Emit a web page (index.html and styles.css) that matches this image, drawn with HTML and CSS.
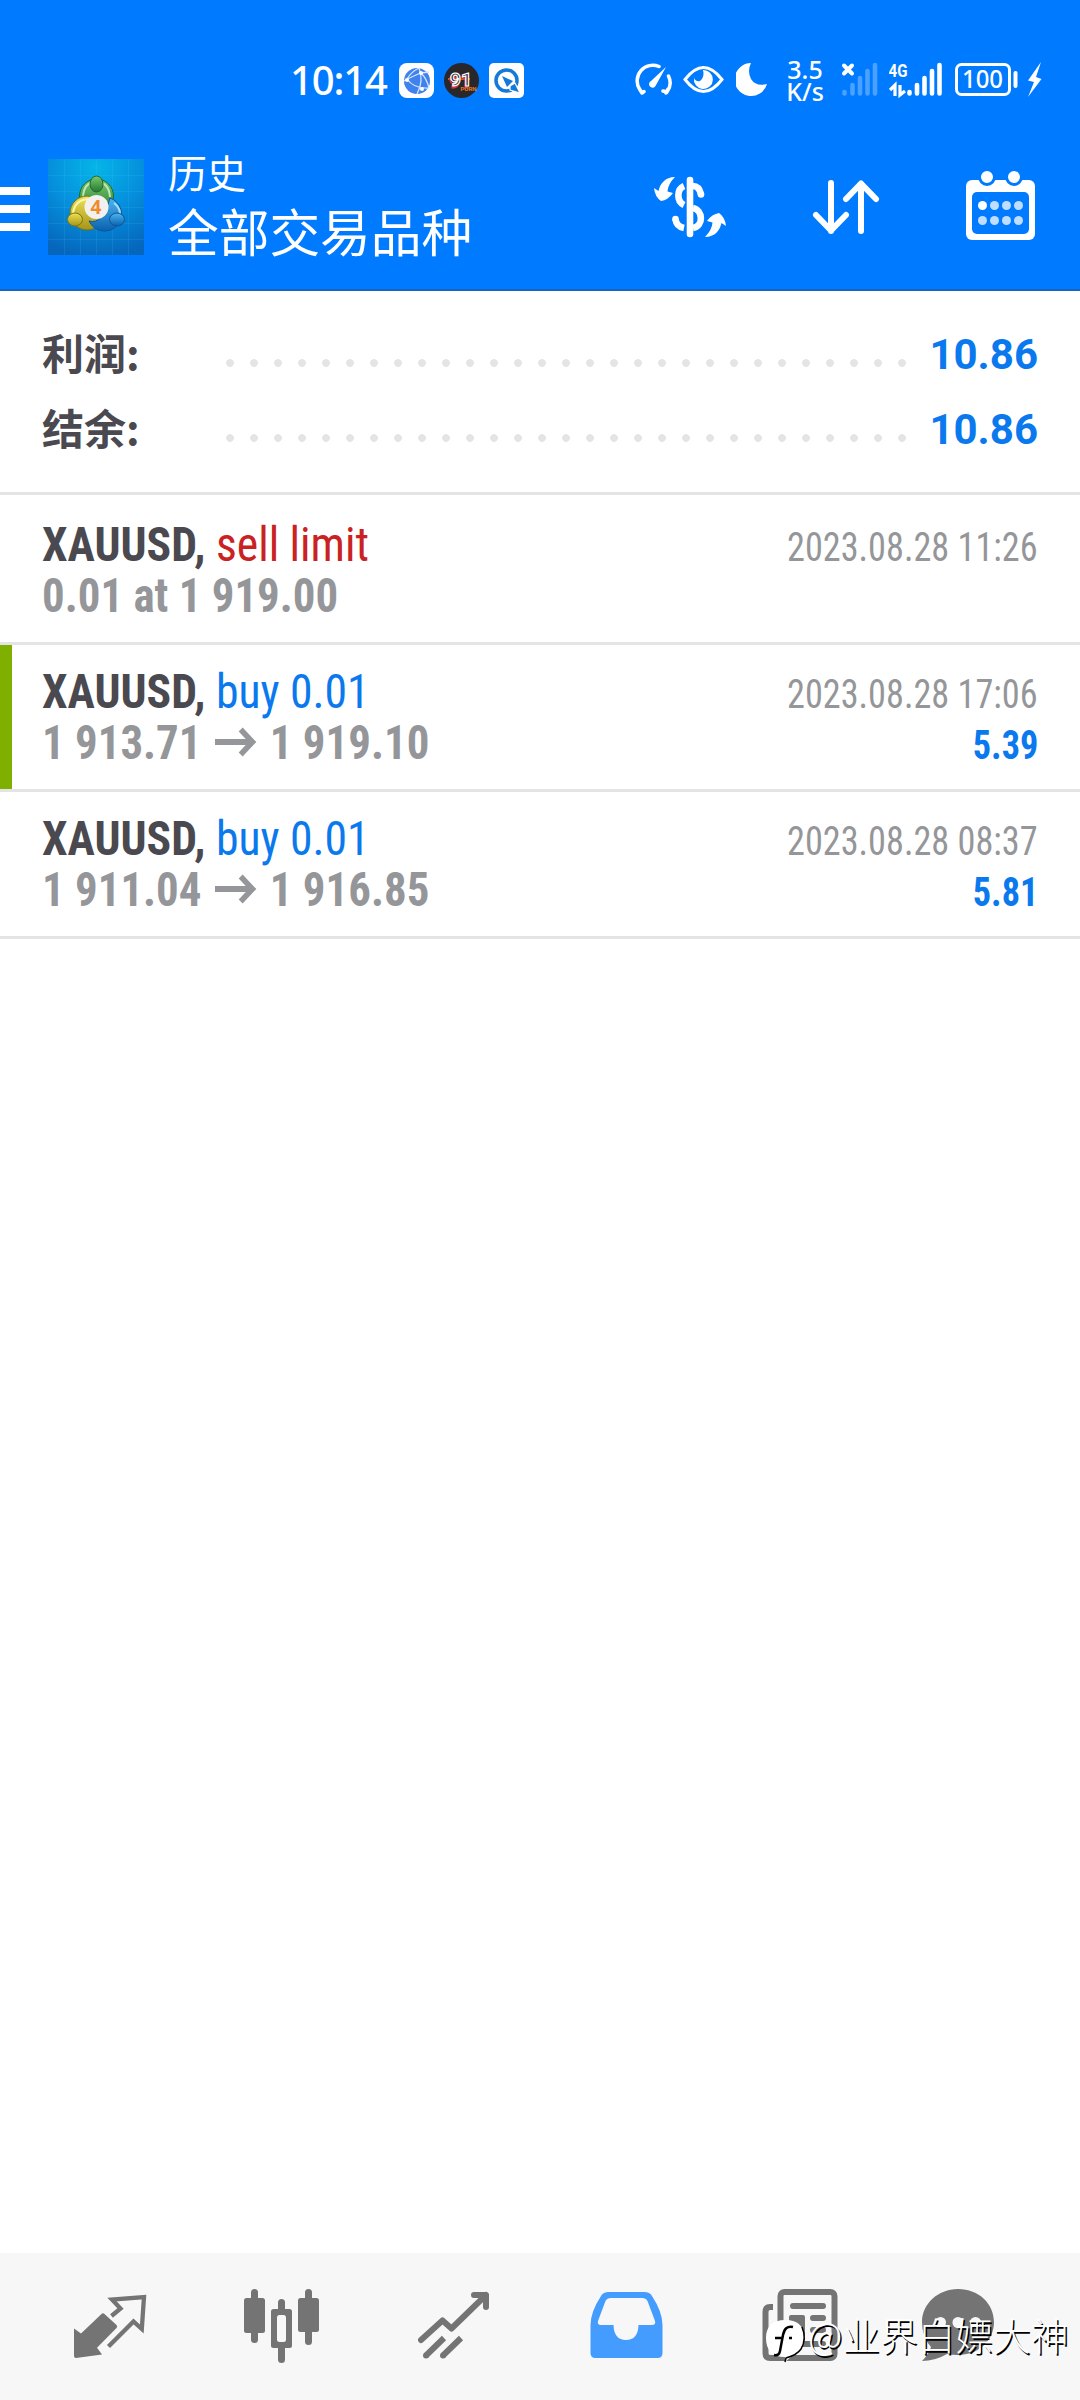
FILE: index.html
```html
<!DOCTYPE html>
<html lang="zh-CN">
<head>
<meta charset="utf-8">
<title>历史</title>
<link rel="stylesheet" href="styles.css">
</head>
<body>
<div class="app">
  <header class="header">
    <div class="status">
      <span class="time">10:14</span>
      <svg class="badge" viewBox="0 0 35 35"><rect width="35" height="35" rx="8" fill="#fff"/><circle cx="18" cy="18" r="13" fill="#3f82ee"/><path d="M20 5Q25 18 18 31M5 18Q16 12 22 10L30 9M8 16Q15 26 30 25M22 10Q28 16 30 25M8 16Q12 9 20 5" fill="none" stroke="#d5e6ff" stroke-width="1.3"/><g fill="#fff"><circle cx="22" cy="10" r="2"/><circle cx="8" cy="17" r="2"/><circle cx="23" cy="26" r="2"/></g></svg>
      <svg class="badge" viewBox="0 0 35 35"><circle cx="17.5" cy="17.5" r="17.5" fill="#29272a"/><path d="M4 16H26" stroke="#e87922" stroke-width="1.5"/><text class="badge-shadow" x="5" y="24.500">91</text><text class="badge-num" x="6" y="23">91</text><text class="badge-cap" x="16.500" y="27.500">PORN</text></svg>
      <svg class="badge" viewBox="0 0 35 35"><rect width="35" height="35" rx="5" fill="#fff"/><circle cx="17.500" cy="17.500" r="10.500" fill="none" stroke="#1479d8" stroke-width="3.500"/><path d="M13 13L24 18L18 24Z" fill="#1479d8"/><path d="M21 23L26 20L31 30L21 27Z" fill="#1479d8" stroke="#fff" stroke-width="1.200"/></svg>
      <span class="spacer"></span>
      <svg class="ico" width="38" height="80" viewBox="635 40 38 80"><g fill="none" stroke="#fff" stroke-width="3.500" stroke-linecap="round"><path d="M642 93L639.500 89A15.600 15.600 0 0 1 659 66.500M668.500 76A15.600 15.600 0 0 1 667 92L663 91M642 93L644 91.500M666 93L668 89"/></g><path d="M666 67L655.500 86A3.500 3.500 0 1 1 651 81Z" fill="#fff"/></svg>
      <svg class="ico eye" width="42" height="80" viewBox="683 40 42 80"><path d="M685 79.500Q703.500 55.500 722 79.500Q703.500 103.500 685 79.500Z" fill="none" stroke="#fff" stroke-width="3"/><path d="M703 70A9.500 9.500 0 1 1 694 78Q696 82 700 81Q705 77 703 70Z" fill="#fff"/></svg>
      <svg class="ico moon" width="32" height="80" viewBox="736 40 32 80"><path d="M751 63A16.500 16.500 0 1 0 767 84Q756 87 751 79Q747 71 751 63Z" fill="#fff"/></svg>
      <span class="speed">3.5<br>K/s</span>
      <svg class="ico sim" width="37" height="80" viewBox="841 40 37 80"><path d="M844 65.500L852 73.500M852 65.500L844 73.500" stroke="#fff" stroke-width="4" stroke-linecap="round"/><path d="M844.500 92V93.500M852.500 85V93.500M860 78V93.500M867.500 71V93.500M875 65V93.500" stroke="#4ba1ff" stroke-width="4.600" stroke-linecap="round"/></svg>
      <svg class="ico lte" width="54" height="80" viewBox="889 40 54 80"><text class="lte-t" x="888.500" y="77" textLength="19" lengthAdjust="spacingAndGlyphs">4G</text><path d="M890 90L895 85V96M900 85V95L905 91" fill="none" stroke="#fff" stroke-width="3.200"/><path d="M909.500 92V93.500M917 85V93.500M924.500 78V93.500M932 71V93.500M939.500 65V93.500" stroke="#fff" stroke-width="4.600" stroke-linecap="round"/></svg>
      <svg class="ico batt" width="64" height="80" viewBox="955 40 64 80"><rect x="956.500" y="64.500" width="53" height="30" rx="5" fill="none" stroke="#fff" stroke-width="3"/><path d="M1015.500 73V86" stroke="#fff" stroke-width="4" stroke-linecap="round"/><text class="batt-t" x="962" y="88" textLength="41" lengthAdjust="spacingAndGlyphs">100</text></svg>
      <svg class="ico bolt" width="16" height="80" viewBox="1027 40 16 80"><path d="M1041 62L1028 80.500L1034 82L1028 97L1041.500 79L1036 77Z" fill="#fff"/></svg>
    </div>
    <div class="appbar">
      <div class="menu"><i></i><i></i><i></i></div>
      <svg class="logo" viewBox="0 0 96 96">
        <defs>
          <radialGradient id="bg" cx="50%" cy="8%" r="95%"><stop offset="0" stop-color="#05b5e8"/><stop offset=".5" stop-color="#0590dd"/><stop offset="1" stop-color="#0566bc"/></radialGradient>
          <linearGradient id="gg" x2="0" y2="1"><stop offset="0" stop-color="#7cc873"/><stop offset="1" stop-color="#237a2d"/></linearGradient>
          <linearGradient id="yy" x2="0" y2="1"><stop offset="0" stop-color="#efe157"/><stop offset="1" stop-color="#a69518"/></linearGradient>
          <linearGradient id="bb" x2="0" y2="1"><stop offset="0" stop-color="#4db5ef"/><stop offset="1" stop-color="#0a61b0"/></linearGradient>
        </defs>
        <rect width="96" height="96" fill="url(#bg)"/>
        <path d="M16.500 0V96M32.500 0V96M48.500 0V96M64.500 0V96M80.500 0V96M0 16.500H96M0 32.500H96M0 48.500H96M0 64.500H96M0 80.500H96" stroke="#5bd0f5" stroke-opacity=".13"/>
        <circle cx="48.500" cy="37" r="17" fill="url(#gg)" stroke="#1d6a2c"/>
        <path d="M35 38Q36 23 48 23Q61 23 62 38" fill="none" stroke="#c0e8b5" stroke-width="2"/>
        <circle cx="39" cy="54" r="17" fill="url(#yy)" stroke="#6f7318"/>
        <path d="M25 54Q27 41 40 40" fill="none" stroke="#fbf6a8" stroke-width="2"/>
        <path d="M62 39A17 17 0 1 1 41 62Q55 66 62 39Z" fill="url(#bb)" stroke="#0c559b"/>
        <path d="M66 44Q73 49 72 58" fill="none" stroke="#a6dcfb" stroke-width="2"/>
        <ellipse cx="48.500" cy="25" rx="6.500" ry="8" fill="url(#gg)" stroke="#1d6a2c"/>
        <ellipse cx="27" cy="60.500" rx="7.500" ry="6.500" fill="url(#yy)" stroke="#7c7614"/>
        <ellipse cx="69" cy="60.500" rx="7.500" ry="6.500" fill="url(#bb)" stroke="#0c559b"/>
        <circle cx="48.500" cy="48" r="12" fill="#f3f0f0"/>
        <text class="logo-t" x="42.500" y="55">4</text>
      </svg>
      <div class="titles"><div class="t1">历史</div><div class="t2">全部交易品种</div></div>
      <svg class="act" width="72" height="80" viewBox="654 160 72 80">
        <g fill="none" stroke="#fff" stroke-width="6.600"><path d="M684 186C677 189 676 201 684 205M693 208C703 210 704 226 693 228M693 186C698 186 700 190 701 194.500M675.500 219C676 224 679 227 684 228"/><path d="M690 180V234M701 194.300V194.500M675.500 219V219.200" stroke-linecap="round"/></g>
        <path id="arr" d="M675 177C665 177 660 184 658.500 191L654 188Q655 197 661 201Q668 200 673 193L667.500 191.500Q668 184 675 177Z" fill="#fff"/>
        <use href="#arr" transform="rotate(180 690 207)"/>
      </svg>
      <svg class="act sort" width="68" height="80" viewBox="812 160 68 80"><path d="M831 183V231M816 215L831 230.500L846 215M861 231V184M846 199L861 183.500L876 199" fill="none" stroke="#fff" stroke-width="6" stroke-linecap="round" stroke-linejoin="round"/></svg>
      <svg class="act cal" width="69" height="80" viewBox="966 160 69 80"><rect x="966" y="180" width="69" height="60" rx="6" fill="#fff"/><rect x="972" y="192" width="57" height="42" rx="5" fill="#007aff"/><g fill="#fff" stroke="#007aff" stroke-width="3"><circle cx="987" cy="177" r="7.500"/><circle cx="1014" cy="177" r="7.500"/></g><g fill="#bfddff"><circle cx="982.500" cy="205.500" r="4.500" fill="#fff"/><circle cx="994.500" cy="205.500" r="4.500"/><circle cx="1006.500" cy="205.500" r="4.500"/><circle cx="1018.500" cy="205.500" r="4.500"/><circle cx="982.500" cy="220.500" r="4.500"/><circle cx="994.500" cy="220.500" r="4.500"/><circle cx="1006.500" cy="220.500" r="4.500"/><circle cx="1018.500" cy="220.500" r="4.500"/></g></svg>
    </div>
  </header>
  <section class="summary">
    <div class="sum"><span class="lbl">利润:</span><span class="dots"></span><span class="val">10.86</span></div>
    <div class="sum"><span class="lbl">结余:</span><span class="dots"></span><span class="val">10.86</span></div>
  </section>
  <main class="list">
    <article class="row first">
      <div class="line"><span class="sym">XAUUSD, <span class="sell">sell limit</span></span><span class="date">2023.08.28 11:26</span></div>
      <div class="line"><span class="price">0.01 at 1 919.00</span></div>
    </article>
    <article class="row marked">
      <div class="line"><span class="sym">XAUUSD, <span class="buy">buy 0.01</span></span><span class="date">2023.08.28 17:06</span></div>
      <div class="line"><span class="price">1 913.71 <svg class="arrow" viewBox="0 0 45 30"><path d="M0 15H40M27.500 2.500L40 15L27.500 27.500" fill="none" stroke="#959699" stroke-width="6"/></svg> 1 919.10</span><span class="profit">5.39</span></div>
    </article>
    <article class="row">
      <div class="line"><span class="sym">XAUUSD, <span class="buy">buy 0.01</span></span><span class="date">2023.08.28 08:37</span></div>
      <div class="line"><span class="price">1 911.04 <svg class="arrow" viewBox="0 0 45 30"><path d="M0 15H40M27.500 2.500L40 15L27.500 27.500" fill="none" stroke="#959699" stroke-width="6"/></svg> 1 916.85</span><span class="profit">5.81</span></div>
    </article>
  </main>
  <nav class="nav">
    <svg width="73" viewBox="74 2253 73 147"><path d="M74 2328.500L81 2333.500L101.500 2314Q103 2312.500 104.500 2314L116.500 2325Q118 2326.500 116.500 2328L97 2347.700L102 2354.500L76 2358Q74 2358 74 2356Z" fill="#747474"/><path d="M111.500 2316L120.500 2308.500L112 2299.500L144 2297L141.800 2329L133.500 2321.500L108.500 2346.500" fill="none" stroke="#747474" stroke-width="4.300"/></svg>
    <svg width="75" viewBox="244 2253 75 147"><g fill="#747474"><rect x="244" y="2298" width="21" height="35" rx="2.500"/><rect x="251" y="2289" width="7" height="54" rx="3.500"/><rect x="298" y="2298" width="21" height="34" rx="2.500"/><rect x="305" y="2289" width="7" height="56" rx="3.500"/><rect x="271" y="2309" width="21" height="39" rx="2.500"/><rect x="278" y="2299" width="7" height="64" rx="3.500"/></g><rect x="277" y="2315" width="9" height="27" rx="2.500" fill="#f7f7f7"/></svg>
    <svg width="71" viewBox="418 2253 71 147"><g fill="none" stroke="#747474" stroke-width="6"><path d="M421 2340L442.500 2320.500L451.500 2328.500L486 2295M474 2295H486V2307" stroke-linecap="round" stroke-linejoin="round"/><path d="M426 2355.500L444 2338M443 2355.500L461 2338"/><path d="M426 2355.500h.1M443 2355.500h.1" stroke-linecap="round"/></g></svg>
    <svg width="73" viewBox="590 2253 73 147"><path fill="#449cff" fill-rule="evenodd" d="M609 2292H644Q650 2292 652 2296Q662.500 2312 662.500 2325V2353Q662.500 2358 657.500 2358H595.500Q590.500 2358 590.500 2353V2325Q590.500 2312 601 2296Q603 2292 609 2292ZM611 2298Q607 2298 605.500 2301L598 2321Q597 2325 601 2325H613.500Q614 2340 626 2340Q638 2340 638.500 2325H652Q656 2325 655 2321L647.500 2301Q646 2298 642 2298Z"/></svg>
    <svg width="76" viewBox="762 2253 76 147"><g fill="none" stroke="#747474" stroke-width="6"><rect x="780.500" y="2292" width="54" height="66" rx="4"/><path d="M773 2307H770Q765.500 2307 765.500 2312V2353Q765.500 2358 770 2358H784"/><path d="M793 2306H823M813 2318H823M813 2330H823M793 2344H823" stroke-linecap="round"/></g><rect x="789" y="2315" width="16" height="22" rx="2" fill="#747474"/></svg>
    <svg width="73" viewBox="922 2253 73 147"><path d="M958 2289C979 2289 994 2304 994 2322C994 2341 978 2355 958 2355Q952 2355 947 2354Q935 2361 922 2361Q929 2354 931 2347Q922 2337 922 2322C922 2304 938 2289 958 2289Z" fill="#747474"/><g fill="#f7f7f7"><circle cx="940.500" cy="2322.500" r="5.500"/><circle cx="958" cy="2322.500" r="5.500"/><circle cx="975.500" cy="2322.500" r="5.500"/></g></svg>
  </nav>
  <div class="mark">
    <svg width="44" height="46" viewBox="0 0 42 46"><path d="M20 3C34 3 39 10 39 21C39 31 35 36 27 39L20 45L20 40C7 40 1 33 1 21C1 9 8 3 20 3Z" fill="#fff"/><path d="M37 10Q42 22 36 32Q32 38 21 41L20 45" fill="none" stroke="#000" stroke-width="1.500"/><path d="M28 10Q20 8 18 18L15 34Q14 39 9 38M10 21H17M24 21H27" fill="none" stroke="#000" stroke-width="2.500"/></svg><span>@业界白嫖大神</span>
  </div>
</div>
</body>
</html>
```
FILE: styles.css
```css
* { box-sizing: border-box; }
body { margin: 0; background: #fff; font-family: Roboto, "Noto Sans CJK SC", sans-serif; }
.app { position: relative; width: 1080px; height: 2400px; display: flex; flex-direction: column; overflow: hidden; }
svg { display: block; flex: none; }
.header { height: 291px; background: #007aff; border-bottom: 2px solid #1565bd; color: #fff; }
.status { height: 120px; padding: 40px 37px 0 290px; display: flex; align-items: center; }
.time { font: 500 40px/80px "Noto Sans", sans-serif; width: 109px; letter-spacing: -1.1px; }
.badge { width: 35px; height: 35px; margin-right: 10px; }
.badge-num { font: 700 19px Roboto, sans-serif; fill: #29272a; stroke: #fff; stroke-width: 1.2px; }
.badge-shadow { font: 700 19px Roboto, sans-serif; fill: none; stroke: #e0323c; stroke-width: 1.2px; }
.badge-cap { font: 700 6px Roboto, sans-serif; fill: #e87922; }
.spacer { flex: 1; }
.eye { margin-left: 10px; }
.moon { margin-left: 11px; }
.speed { width: 40px; margin: 0 16px 0 17px; text-align: center; font: 500 25px/22px "Noto Sans", sans-serif; }
.lte { margin-left: 11px; }
.batt { margin-left: 12px; }
.bolt { margin-left: 8px; }
.lte-t { font: 700 19px Roboto, sans-serif; fill: #fff; }
.batt-t { font: 500 25px "Noto Sans", sans-serif; fill: #fff; }
.appbar { height: 169px; display: flex; align-items: flex-start; padding-right: 45px; }
.menu { width: 30px; margin: 67px 18px 0 0; display: flex; flex-direction: column; gap: 10px; }
.menu i { height: 8px; background: #fff; }
.logo { width: 96px; height: 96px; margin-top: 39px; }
.logo-t { font: 700 19px "Open Sans", sans-serif; fill: #f18a2b; }
.titles { width: 510px; padding: 35px 0 0 24px; white-space: nowrap; }
.t1 { font-size: 39px; line-height: 40px; }
.t2 { font-size: 50.700px; line-height: 60px; margin-top: 10px; }
.act { margin-top: 40px; }
.sort { margin-left: 86px; }
.cal { margin-left: 86px; }
.summary { height: 204px; padding: 26px 42px 0 42px; border-bottom: 3px solid #e4e4e4; }
.sum { height: 75px; display: flex; align-items: center; }
.lbl { width: 176px; padding-bottom: 6px; font: 700 42px/60px "Noto Sans CJK SC", sans-serif; color: #4a494f; }
.dots { width: 696px; height: 8px; margin-top: 16px; background: radial-gradient(circle at 12px 4px, #e4e4e4 3.500px, transparent 4.200px) 0 0 / 24px 8px; }
.val { flex: 1; text-align: right; font-size: 42px; font-weight: 700; color: #0b79ee; }
.row { height: 147px; padding: 21px 42px 0; border-bottom: 3px solid #e4e4e4; font-family: "Roboto Condensed", Roboto, sans-serif; font-stretch: 75%; }
.first { height: 150px; padding-top: 24px; }
.marked { background: linear-gradient(#7fb000, #7fb000) 0 0 / 12px 100% no-repeat; }
.line { height: 51px; display: flex; justify-content: space-between; align-items: baseline; line-height: 51px; white-space: pre; }
.sym, .price { transform-origin: left; font-size: 48px; font-weight: 700; }
.sym { color: #4a494f; transform: scaleX(.951); }
.sell { font-weight: 400; color: #ca2222; }
.buy { font-weight: 400; color: #0b79ee; }
.price { color: #959699; transform: scaleX(.935); }
.arrow { display: inline-block; width: 45px; height: 30px; margin: 0 3px; vertical-align: 2px; }
.date, .profit { transform-origin: right; transform: scaleX(.906); font-size: 40px; }
.date { color: #959699; }
.profit { font-weight: 700; color: #0b79ee; }
.list { flex: 1; }
.nav { height: 147px; background: #f7f7f7; padding: 0 85px 0 74px; display: grid; grid-template-columns: 170px 174px 172px 172px 160px 73px; }
.nav svg { height: 147px; }
.mark { position: absolute; left: 764px; top: 2317px; display: flex; align-items: center; height: 46px; color: #fff; }
.mark span { margin-top: -12px; font: 300 37.700px/46px "Noto Sans CJK SC", sans-serif; white-space: nowrap; text-shadow: 1.500px 1.500px 0 #000; }
```
